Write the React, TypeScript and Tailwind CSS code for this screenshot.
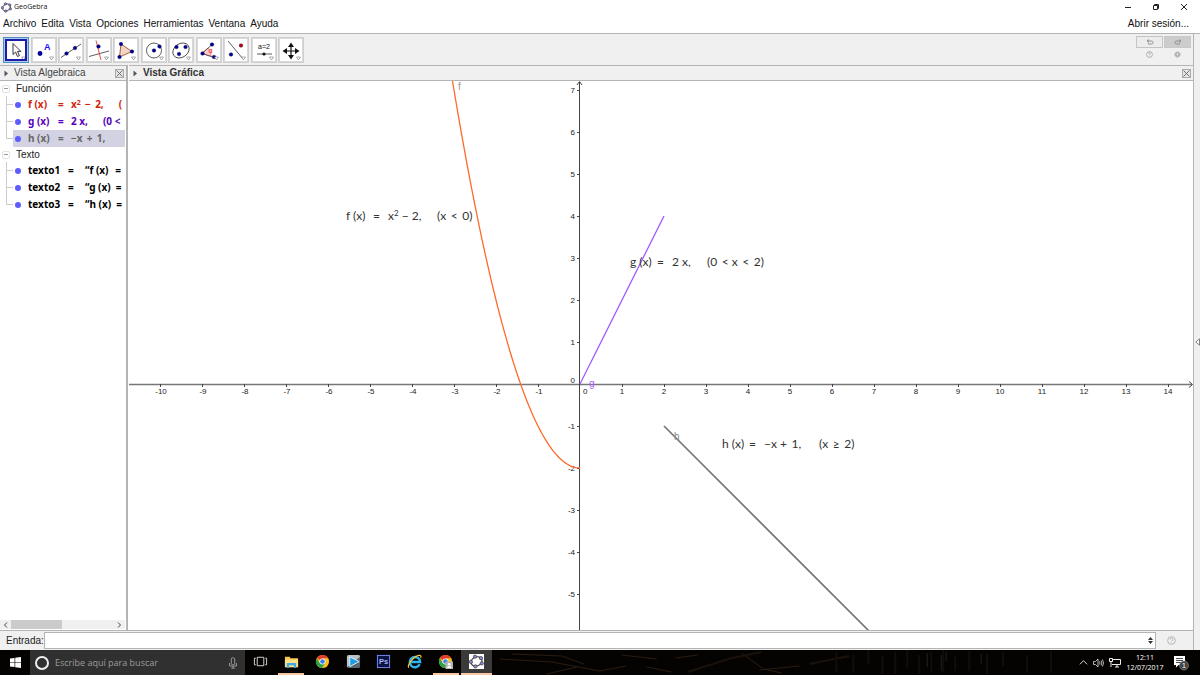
import type { ReactNode } from 'react';
import clsx from 'clsx';

const menuItems = ['Archivo', 'Edita', 'Vista', 'Opciones', 'Herramientas', 'Ventana', 'Ayuda'];

// plot geometry: one unit is 42px, origin inside the svg viewBox
const UNIT = 42;
const OX = 451;
const OY = 303;
const px = (x: number) => OX + x * UNIT;
const py = (y: number) => OY - y * UNIT;

const xTicks = Array.from({ length: 25 }, (_, i) => i - 10).filter((n) => n !== 0);
const yTicks = Array.from({ length: 13 }, (_, i) => i - 5).filter((n) => n !== 0);

const parabola = Array.from({ length: 63 }, (_, i) => {
  const x = -3.1 + i * 0.05;
  return `${px(x).toFixed(1)},${py(x * x - 2).toFixed(1)}`;
}).join(' ');

function Dot({ x, y, fill = '#00009c' }: { x: number; y: number; fill?: string }) {
  return <circle cx={x} cy={y} r="1.8" fill={fill} stroke="#000040" strokeWidth=".4" />;
}

const tools: { label: string; icon: ReactNode }[] = [
  {
    label: 'Elige y mueve',
    icon: <path d="M8 4.5v11l2.6-2.4 1.9 4.4 1.9-.8-1.9-4.3h3.4z" fill="#fff" stroke="#222" strokeWidth=".9" />,
  },
  {
    label: 'Punto',
    icon: (
      <>
        <circle cx="7" cy="14.5" r="2.4" fill="#00009c" />
        <text x="11" y="11" fontSize="9" fontWeight="bold" fill="#1414ff" fontFamily="Liberation Sans">A</text>
      </>
    ),
  },
  {
    label: 'Recta',
    icon: (
      <>
        <path d="M1 18.5 21 5" stroke="#333" strokeWidth=".8" />
        <Dot x={6.5} y={14.5} />
        <Dot x={15} y={9} />
      </>
    ),
  },
  {
    label: 'Perpendicular',
    icon: (
      <>
        <path d="M1 17.500 21 12" stroke="#333" strokeWidth=".8" />
        <path d="M8 1.500 13 21" stroke="#e33" strokeWidth=".9" />
        <Dot x={10.5} y={7.500} />
      </>
    ),
  },
  {
    label: 'Polígono',
    icon: (
      <>
        <path d="M6 5 17 12.500 4.500 18z" fill="#f0d4c4" stroke="#a0522d" strokeWidth=".9" />
        <Dot x={6} y={5} />
        <Dot x={17} y={12.5} />
        <Dot x={4.5} y={18} />
      </>
    ),
  },
  {
    label: 'Circunferencia',
    icon: (
      <>
        <circle cx="11" cy="11.500" r="7.500" fill="none" stroke="#333" strokeWidth=".8" />
        <Dot x={11} y={11.5} />
        <Dot x={16.5} y={7.500} />
      </>
    ),
  },
  {
    label: 'Elipse',
    icon: (
      <>
        <ellipse cx="11" cy="11.500" rx="8.800" ry="6.800" transform="rotate(-35 11 11.500)" fill="none" stroke="#333" strokeWidth=".8" />
        <Dot x={6.5} y={8} />
        <Dot x={9} y={15} />
        <Dot x={15.5} y={8} />
      </>
    ),
  },
  {
    label: 'Ángulo',
    icon: (
      <>
        <path d="M4 14.500 10 9a8 8 0 0 1 3 8z" fill="#fcc" stroke="#e55" strokeWidth=".6" />
        <path d="M14 5.500 4 14.500l12 4" fill="none" stroke="#333" strokeWidth=".8" />
        <text x="10.500" y="14" fontSize="7" fill="#e11" fontFamily="Liberation Sans">α</text>
        <Dot x={14} y={5.5} />
        <Dot x={4.500} y={14.5} />
        <Dot x={16} y={18} />
      </>
    ),
  },
  {
    label: 'Simetría',
    icon: (
      <>
        <path d="M3 2 18 20" stroke="#333" strokeWidth=".8" />
        <Dot x={6} y={15.5} />
        <Dot x={16} y={6.5} fill="#c00" />
      </>
    ),
  },
  {
    label: 'Deslizador',
    icon: (
      <>
        <text x="11" y="10" textAnchor="middle" fontSize="7" fill="#111" fontFamily="Liberation Sans">a=2</text>
        <path d="M4 15h15" stroke="#333" strokeWidth=".8" />
        <circle cx="11" cy="15" r="1.600" fill="#111" />
      </>
    ),
  },
  {
    label: 'Desplaza vista gráfica',
    icon: (
      <>
        <path d="M11 6v12M5 12h12" stroke="#111" strokeWidth="1.200" />
        <path d="M11 3.500 8 8h6zM11 20.500 8 16h6zM2.500 12l4.500-3v6zM19.500 12l-4.500-3v6z" fill="#111" />
      </>
    ),
  },
];

function ToolButton({ label, icon, active }: { label: string; icon: ReactNode; active?: boolean }) {
  return (
    <button
      aria-label={label}
      className={clsx(
        'h-[26px] w-[26px] border p-px',
        active ? 'border-[#4f8fc4] bg-[#a9cdea]' : 'border-[#cfcfcf] bg-[#d9d9d9]',
      )}
    >
      <svg viewBox="0 0 22 22" className="h-full w-full bg-white">
        {icon}
        <path d="M16.500 18h4l-2 3z" fill="#fff" stroke="#777" strokeWidth=".6" />
        {active && <rect x="1" y="1" width="20" height="20" fill="none" stroke="#1c1ca8" strokeWidth="2" />}
      </svg>
    </button>
  );
}

function GeoLogo({ className }: { className?: string }) {
  return (
    <svg viewBox="0 0 20 20" className={className}>
      <ellipse cx="10" cy="10" rx="7.500" ry="6" transform="rotate(-25 10 10)" fill="none" stroke="#444" strokeWidth="1.600" />
      {[[8, 3.5], [16, 5.500], [17, 12.5], [8.500, 16.500], [2.500, 10.500]].map(([x, y]) => (
        <circle key={x} cx={x} cy={y} r="2.2" fill="#8b8bd8" stroke="#333" strokeWidth=".9" />
      ))}
    </svg>
  );
}

function CloseBox() {
  return (
    <button aria-label="Cerrar" className="h-[9px] w-[9px] border border-[#aaa] bg-[#e4e4e4]">
      <svg viewBox="0 0 7 7" className="h-full w-full">
        <path d="m.5.5 6 6m0-6-6 6" stroke="#666" strokeWidth=".9" />
      </svg>
    </button>
  );
}

function PanelHeader({ title, bold }: { title: string; bold?: boolean }) {
  return (
    <div className="flex h-4 shrink-0 items-center gap-[5px] border-y border-[#b4b4b4] bg-[#f0f0f0] pr-[2px] pl-1">
      <svg viewBox="0 0 5 7" className="h-[7px] w-[5px]">
        <path d="M.5.5 4 3.500.5 6.500z" fill="#555" />
      </svg>
      <h2 className={clsx('flex-1 truncate text-[10px] leading-[14px]', bold ? 'font-bold text-[#333]' : 'text-[#444]')}>{title}</h2>
      <CloseBox />
    </div>
  );
}

type Row = { name: string; body: ReactNode; cond?: string; color: string; selected?: boolean };

// operators get an extra thin space on both sides
const funciones: Row[] = [
  { name: 'f (x)', body: <>x<Sup />{' \u2009− \u20092,'}</>, cond: '(', color: 'text-[#d32408]' },
  { name: 'g (x)', body: '2 x,', cond: '(0 <', color: 'text-[#5500bb]' },
  { name: 'h (x)', body: '−x \u2009+ \u20091,', color: 'text-[#666]', selected: true },
];

const textos: Row[] = [
  { name: 'texto1', body: '“f (x)  \u2009=', color: 'text-black' },
  { name: 'texto2', body: '“g (x)  =', color: 'text-black' },
  { name: 'texto3', body: '“h (x)  =', color: 'text-black' },
];

function Sup() {
  return <sup className="text-[7px]">2</sup>;
}

function TreeGroup({ title, rows, wide }: { title: string; rows: Row[]; wide?: boolean }) {
  return (
    <li>
      <div className="flex h-[15px] items-center gap-[6px] pl-[2px]">
        <button aria-label={`Contraer ${title}`} className="flex h-2 w-2 items-center justify-center rounded-xs border border-[#e2e2e2]">
          <span className="h-px w-1 bg-[#999]" />
        </button>
        <span className="text-[10px] leading-[15px] text-[#222]">{title}</span>
      </div>
      <ul>
        {rows.map((r, i) => (
          <li key={r.name} className="flex h-[17px] pl-[6px]">
            <span className="flex w-[7px] shrink-0 flex-col">
              <span className="h-[9px] border-b border-l border-[#ccc]" />
              <span className={clsx('flex-1', i < rows.length - 1 && 'border-l border-[#ccc]')} />
            </span>
            <div className={clsx('flex min-w-0 flex-1 items-center overflow-hidden', r.selected && 'bg-[#d2d2e2]')}>
              <span className="mx-[2px] h-[6px] w-[6px] shrink-0 rounded-full bg-[#5c5cff]" />
              <div className={clsx("flex pl-[5px] font-['Noto_Sans','Open_Sans',sans-serif] text-[10px] leading-[17px] font-bold whitespace-pre", r.color)}>
                <span className={wide ? 'w-[40px]' : 'w-[30px]'}>{r.name}</span>
                <span className={wide ? 'w-[17px]' : 'w-[13px]'}>=</span>
                <span>{r.body}</span>
                {r.cond && <span className="pl-[15px]">{r.cond}</span>}
              </div>
            </div>
          </li>
        ))}
      </ul>
    </li>
  );
}

function Formula({ x, y, name, body, cond, condX }: { x: number; y: number; name: string; body: ReactNode; cond: string; condX: number }) {
  return (
    <text y={y} fill="#333" fontSize="12" className="font-['Lato',sans-serif]">
      <tspan x={x}>{name}</tspan>
      <tspan x={x + 27}>=</tspan>
      <tspan x={x + 42}>{body}</tspan>
      <tspan x={condX}>{cond}</tspan>
    </text>
  );
}

function Plot() {
  return (
    <svg viewBox="0 0 1064 549" preserveAspectRatio="xMidYMid slice" className="min-h-0 w-full flex-1 bg-white" role="img" aria-label="Vista Gráfica">
      <g stroke="#444" strokeWidth="1" fill="none">
        <path d="M0 303.500H1063" stroke="#777" strokeWidth="1.500" />
        <path d="M1060 300.500 1063.500 303.500 1060 306.500" />
        <path d="M450.500 1V549" />
        <path d="M448 4 450.500 .5 453 4" />
        {xTicks.map((n) => (
          <path key={n} d={`M${px(n) + 0.5} 303v3`} />
        ))}
        {yTicks.map((n) => (
          <path key={n} d={`M448 ${py(n) + 0.5}h3`} />
        ))}
      </g>
      <g fontSize="8" fill="#222">
        {xTicks.map((n) => (
          <text key={n} x={px(n) + (n < 0 ? 1 : 0)} y="313" textAnchor="middle">{n}</text>
        ))}
        {yTicks.map((n) => (
          <text key={n} x="446" y={py(n) + 3} textAnchor="end">{n}</text>
        ))}
        <text x="454" y="313">0</text>
        <text x="446" y="302" textAnchor="end">0</text>
      </g>
      <polyline points={parabola} fill="none" stroke="#ff6a2a" strokeWidth="1.300" />
      <path d={`M${px(0)} ${py(0)}L${px(2)} ${py(4)}`} stroke="#9a55ff" strokeWidth="1.200" />
      <path d={`M${px(2)} ${py(-1)}L${px(7)} ${py(-6)}`} stroke="#777" strokeWidth="1.700" />
      <g fontSize="10">
        <text x="329" y="9" fill="#999">f</text>
        <text x="460" y="306" fill="#a766ff">g</text>
        <text x="545" y="359" fill="#888">h</text>
      </g>
      <Formula x={217} y={139} name="f (x)" body={<>x<tspan fontSize="8" dy="-4">2</tspan><tspan dy="4"> − 2,</tspan></>} cond={'(x\u2009 < \u20090)'} condX={308} />
      <Formula x={501} y={185} name="g (x)" body="2 x," cond={'(0\u2009 < x\u2009 < \u20092)'} condX={578} />
      <Formula x={593} y={367} name="h (x)" body={'−x + \u20091,'} cond={'(x\u2009 ≥ \u20092)'} condX={690} />
    </svg>
  );
}

function Chrome() {
  return (
    <>
      <circle cx="8" cy="8" r="7" fill="#fbc116" />
      <path d="M8 8 1.900 4.500A7 7 0 0 1 14.100 4.500H8z" fill="#e33b2e" />
      <path d="M1.900 4.500A7 7 0 0 0 7.500 15L10.800 9.500 8 8 5 9.500z" fill="#2aa14a" />
      <circle cx="8" cy="8" r="3.200" fill="#fff" />
      <circle cx="8" cy="8" r="2.500" fill="#3b7ded" />
    </>
  );
}

const apps: { label: string; icon: ReactNode; running?: boolean; active?: boolean }[] = [
  {
    label: 'Vista de tareas',
    icon: <path d="M4.500 3.500h7v9h-7zM3 4.500H1.500v7H3M13 4.500h1.500v7H13" fill="none" stroke="#ddd" />,
  },
  {
    label: 'Explorador de archivos',
    running: true,
    icon: (
      <>
        <path d="M1 3h5l1 1.500h8V14H1z" fill="#f5c84c" />
        <path d="M1 6h14v8H1z" fill="#ffe08a" />
        <path d="M3 15V9.500h10V15h-2.500v-3h-5v3z" fill="#3fa9e8" />
      </>
    ),
  },
  { label: 'Chrome', icon: <Chrome /> },
  {
    label: 'Reproductor',
    icon: (
      <>
        <rect x="1" y="1" width="14" height="14" rx="2" fill="#59666c" />
        <path d="M1 3a2 2 0 0 1 2-2h10a2 2 0 0 1 2 2L1 14z" fill="#b9c3c6" />
        <path d="M4 3v10.500L14 8z" fill="#1d9be0" stroke="#e8f4fa" />
      </>
    ),
  },
  {
    label: 'Photoshop',
    icon: (
      <>
        <rect x="1.500" y="1.500" width="13" height="13" fill="#0c1442" stroke="#7a8cff" />
        <text x="8" y="11" textAnchor="middle" fontSize="8" fontWeight="bold" fill="#a5b4ff">Ps</text>
      </>
    ),
  },
  {
    label: 'Internet Explorer',
    icon: (
      <>
        <path d="M13.500 11A5.500 5.500 0 1 1 14 8.500H4.500" fill="none" stroke="#2fb4f0" strokeWidth="2.600" />
        <path d="M2 14.500C-.5 12 8 1.500 13.500 1.500c1.500 0 1.500 1.500 1 2.500" fill="none" stroke="#f6c530" strokeWidth="1.300" />
      </>
    ),
  },
  {
    label: 'Chrome, perfil',
    running: true,
    icon: (
      <>
        <Chrome />
        <rect x="8" y="8" width="8" height="8" fill="#b4b4b4" />
        <circle cx="12" cy="11" r="1.500" fill="#fff" />
        <path d="M9.500 15c0-3 5-3 5 0z" fill="#fff" />
      </>
    ),
  },
  { label: 'GeoGebra', running: true, active: true, icon: null },
];

function Taskbar() {
  return (
    <footer className="flex h-[25px] shrink-0 bg-[#050302] text-white">
      <button aria-label="Inicio" className="flex w-[30px] items-center justify-center">
        <svg viewBox="0 0 12 12" className="h-[11px] w-[11px]" fill="#fff">
          <path d="M0 1.700 5 1v4.600H0zM5.700.9 12 0v5.600H5.700zM0 6.400h5V11l-5-.7zM5.700 6.400H12V12l-6.300-.9z" />
        </svg>
      </button>
      <label className="flex w-[215px] items-center gap-[6px] bg-[#303030] px-[5px]">
        <span className="h-[14px] w-[14px] shrink-0 rounded-full border-2 border-[#eee]" />
        <input
          aria-label="Buscar"
          placeholder="Escribe aquí para buscar"
          className="h-4 min-w-0 flex-1 bg-transparent font-['Open_Sans',sans-serif] text-[9px] outline-none placeholder:text-[#9c9c9c]"
        />
        <svg viewBox="0 0 10 14" className="h-[12px] w-[14px]" fill="none" stroke="#aaa">
          <rect x="3" y="1" width="4" height="8" rx="1.500" />
          <path d="M1 7v3.500h8V7M5 10.500V13M3 13h4" />
        </svg>
      </label>
      <nav className="flex w-[247px] shrink-0">
        {apps.map((a) => (
          <button key={a.label} aria-label={a.label} className={clsx('flex flex-1 flex-col items-center', a.active && 'bg-[#3c3a39]')}>
            <span className="flex w-full flex-1 items-center justify-center">
              {a.active ? (
                <GeoLogo className="h-[15px] w-[15px] bg-white" />
              ) : (
                <svg viewBox="0 0 16 16" className="h-[15px] w-[15px]">{a.icon}</svg>
              )}
            </span>
            <span className={clsx('h-[2px]', a.running && 'bg-[#f8c8a4]', a.active ? 'w-full' : 'w-[26px]')} />
          </button>
        ))}
      </nav>
      {/* wallpaper showing through the bar */}
      <svg viewBox="0 0 588 25" preserveAspectRatio="none" className="h-full min-w-0 flex-1" fill="none">
        <g stroke="#2b1c10">
          <path d="M8 9 60 12 108 21 134 16M20 4 70 6 92 14M55 24 85 17M130 5l35 4M155 17l25 5M184 8l22-3M250 3l22 16 18 4M268 20l40-4" />
          <path d="M196 22 240 8 270 2M318 14l40-8" stroke="#1a110a" strokeWidth="2" />
        </g>
        <path d="M345 2v20M362 5v18M377 0v14M391 6v18M404 2v22M416 0v18M428 5v19M440 2v20M452 0v22M464 6v15M478 1v20M496 4v20M512 2v14M536 5v18M560 1v22" stroke="#120d0a" strokeWidth="2" />
        <path d="M436 3v14M450 5v16M455 2v9M490 4v10" stroke="#1c2022" />
      </svg>
      <div className="flex items-center gap-[5px] pr-[11px]">
        <button aria-label="Mostrar iconos ocultos">
          <svg viewBox="0 0 10 10" className="h-[9px] w-[9px]" fill="none" stroke="#eee">
            <path d="m1 7 4-4 4 4" />
          </svg>
        </button>
        <button aria-label="Volumen">
          <svg viewBox="0 0 11 10" className="h-[10px] w-[11px]" fill="none" stroke="#ddd" strokeWidth=".8">
            <path d="M.5 3.500h2L5 1v8L2.500 6.500h-2zM6.500 3.500q1 1.500 0 3M8 2.500q1.800 2.500 0 5M9.500 1.500q2 3.500 0 7" />
          </svg>
        </button>
        <button aria-label="Red">
          <svg viewBox="0 0 12 11" className="h-[11px] w-[12px]" fill="none" stroke="#eee">
            <path d="M4 2.500h7.500v5H3M6 10h4M8 7.500V10M.5 1.500h3v3h-3zM2 4.500V10" />
          </svg>
        </button>
        <time className="w-[38px] text-center font-['Open_Sans',sans-serif] text-[7px] leading-[10px]">
          12:11
          <br />
          12/07/2017
        </time>
        <button aria-label="Notificaciones" className="pl-1">
          <svg viewBox="0 0 16 16" className="h-4 w-4">
            <path d="M1 1h11v9H5.500L3 12.500V10H1z" fill="#fff" />
            <path d="M3 3.500h7M3 5.500h7M3 7.500h5" stroke="#222" strokeWidth=".8" />
            <circle cx="11" cy="10.500" r="4.500" fill="#444" stroke="#999" strokeWidth=".6" />
            <text x="11" y="13" textAnchor="middle" fontSize="7" fill="#fff">1</text>
          </svg>
        </button>
      </div>
    </footer>
  );
}

export default function App() {
  return (
    <div className="flex min-h-screen flex-col bg-white font-['Liberation_Sans',Arial,sans-serif] text-[#111]">
      {/* title bar */}
      <header className="flex h-[14px] items-center gap-[2px] pr-3 pl-px">
        <GeoLogo className="h-[11px] w-[11px]" />
        <h1 className="flex-1 font-['Open_Sans',sans-serif] text-[7px] leading-[14px]">GeoGebra</h1>
        <div className="flex gap-5">
          <button aria-label="Minimizar">
            <svg viewBox="0 0 8 8" className="h-2 w-2" fill="none" stroke="#222"><path d="M1 4.500h6" /></svg>
          </button>
          <button aria-label="Restaurar">
            <svg viewBox="0 0 8 8" className="h-2 w-2" fill="none" stroke="#222"><path d="M1.500 2.500h4v4h-4zM2.500 2.500v-1h4v4h-1" /></svg>
          </button>
          <button aria-label="Cerrar ventana">
            <svg viewBox="0 0 8 8" className="h-2 w-2" fill="none" stroke="#222"><path d="m1 1 6 6m0-6L1 7" /></svg>
          </button>
        </div>
      </header>

      <nav className="flex h-5 items-center gap-[5px] border-b border-[#b4b4b4] pr-[11px] pl-[3px] text-[10px] leading-5">
        {menuItems.map((m) => (
          <button key={m}>{m}</button>
        ))}
        <button className="ml-auto">Abrir sesión...</button>
      </nav>

      <div className="flex flex-1">
        <div className="flex min-w-0 flex-1 flex-col">
          {/* toolbar */}
          <div className="flex h-[31px] shrink-0 items-center justify-between bg-[#f0f0f0] pr-[2px] pl-[3px]">
            <div className="flex w-[301px] justify-between">
              {tools.map((t, i) => (
                <ToolButton key={t.label} {...t} active={i === 0} />
              ))}
            </div>
            <div className="grid grid-cols-2 gap-x-px gap-y-px pb-1">
              <button aria-label="Deshacer" className="flex h-3 w-[27px] items-center justify-center border border-[#c4c4c4] bg-[#ececec]">
                <svg viewBox="0 0 8 6" className="h-[6px] w-2" fill="none" stroke="#888" strokeWidth=".9"><path d="M3 .5 1 2l2 1.500M1 2h4.500q1.500 0 1.500 1.500T5.500 5H2" /></svg>
              </button>
              <button aria-label="Rehacer" className="flex h-3 w-[27px] items-center justify-center border border-[#c8c8c8] bg-[#cccccc]">
                <svg viewBox="0 0 8 6" className="h-[6px] w-2" fill="none" stroke="#888" strokeWidth=".9"><path d="M5 .5 7 2 5 3.500M7 2H2.500Q1 2 1 3.500T2.500 5H6" /></svg>
              </button>
              <button aria-label="Ayuda" className="flex h-[11px] items-center justify-center">
                <svg viewBox="0 0 8 8" className="h-[7px] w-[7px]" fill="none" stroke="#999" strokeWidth=".8"><circle cx="4" cy="4" r="3.400" /><path d="M3 3q0-1 1-1t1 1-1 1.500M4 5.500v.8" /></svg>
              </button>
              <button aria-label="Configuración" className="flex h-[11px] items-center justify-center">
                <svg viewBox="0 0 8 8" className="h-[7px] w-[7px]" fill="none" stroke="#999"><circle cx="4" cy="4" r="2" strokeWidth="1.400" /><circle cx="4" cy="4" r="3.200" strokeDasharray="1.200 1.300" /></svg>
              </button>
            </div>
          </div>

          <div className="flex flex-1">
            <aside className="flex w-[128px] shrink-0 flex-col border-r-2 border-[#b4b4b4]">
              <PanelHeader title="Vista Algebraica" />
              <ul className="flex-1 pr-px">
                <TreeGroup title="Función" rows={funciones} />
                <TreeGroup title="Texto" rows={textos} wide />
              </ul>
              <div className="mr-px mb-px flex h-[9px] items-center justify-between bg-[#f0f0f0] px-[3px]">
                <svg viewBox="0 0 5 6" className="h-[6px] w-[5px]" fill="none" stroke="#444"><path d="M4 .5 1.500 3 4 5.500" /></svg>
                <div className="mr-auto ml-[3px] h-full w-[51px] bg-[#cbcbcb]" />
                <svg viewBox="0 0 5 6" className="h-[6px] w-[5px]" fill="none" stroke="#444"><path d="M1 .5 3.500 3 1 5.500" /></svg>
              </div>
            </aside>
            <main className="flex min-w-0 flex-1 flex-col pl-px">
              <PanelHeader title="Vista Gráfica" bold />
              <Plot />
            </main>
          </div>

          {/* input bar */}
          <form className="flex h-5 shrink-0 items-center border-t border-[#b4b4b4] bg-[#f0f0f0] pl-[6px] text-[10px]">
            <label htmlFor="entrada" className="text-[#222]">Entrada:</label>
            <div className="flex h-[17px] min-w-0 flex-1 items-center border border-[#b4b4b4] bg-white pr-[2px]">
              <input id="entrada" className="h-full min-w-0 flex-1 px-1 outline-none" />
              <svg viewBox="0 0 5 7" className="h-[7px] w-[5px]" fill="#333"><path d="M2.500 0 5 3H0zM2.500 7 5 4H0z" /></svg>
            </div>
            <button type="button" aria-label="Ayuda de entrada" className="flex w-[37px] items-center justify-center pr-[7px]">
              <svg viewBox="0 0 10 10" className="h-[9px] w-[9px]" fill="none" stroke="#aaa" strokeWidth=".9"><circle cx="5" cy="5" r="4.300" /><path d="M3.500 4q0-1.500 1.500-1.500T6.500 4 5 5.700M5 7v.9" /></svg>
            </button>
          </form>
        </div>
        <button aria-label="Mostrar panel lateral" className="flex w-[7px] shrink-0 items-center justify-center border-l border-[#b4b4b4] bg-[#f0f0f0]">
          <svg viewBox="0 0 5 8" className="h-2 w-[5px]" fill="#fff" stroke="#666" strokeWidth=".8"><path d="M4.500.8v6.400L.8 4z" /></svg>
        </button>
      </div>
      <Taskbar />
    </div>
  );
}
